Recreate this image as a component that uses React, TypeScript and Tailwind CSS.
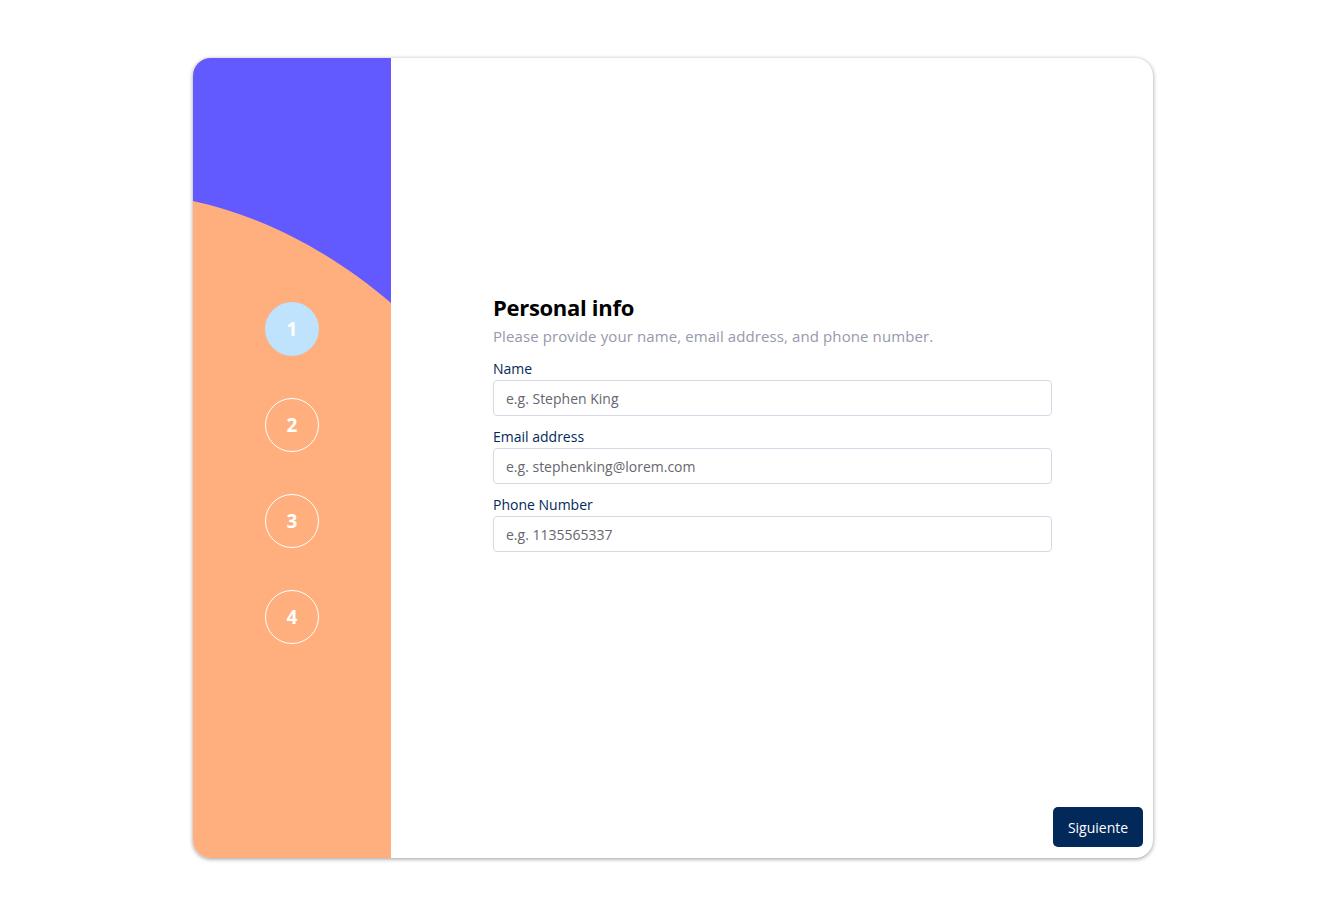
import React from "react";

const font = { fontFamily: '"Open Sans", "Noto Sans", sans-serif' };

function Field({ label, placeholder }: { label: string; placeholder: string }) {
  return (
    <div className="flex flex-col">
      <label className="text-[14px] leading-[18px] text-[#02295a] mb-[2px]">{label}</label>
      <input
        placeholder={placeholder}
        className="h-[36px] w-full rounded-[4px] border border-[#d6d9e6] px-[12px] text-[14px] text-[#02295a] placeholder:text-[#66666e] outline-none"
      />
    </div>
  );
}

export default function App() {
  const steps = [1, 2, 3, 4];
  return (
    <div className="min-h-[911px] w-full bg-white flex justify-center pt-[58px] pl-[7px]" style={font}>
      <div className="flex w-[960px] h-[800px] rounded-[18px] overflow-hidden bg-white shadow-[0_1px_4px_rgba(0,0,0,0.4)]">
        <div className="relative w-[198px] h-full bg-[#ffaf7e]">
          <svg className="absolute inset-0" width="198" height="800" viewBox="0 0 198 800">
            <path d="M0,0 L198,0 L198,245 C140,195 70,158 0,143 Z" fill="#6259ff" />
          </svg>
          <div className="relative flex flex-col items-center gap-[42px] pt-[244px]">
            {steps.map((n) =>
              n === 1 ? (
                <div
                  key={n}
                  className="w-[54px] h-[54px] rounded-full bg-[#bfe2fd] flex items-center justify-center text-white font-bold text-[19px]"
                >
                  {n}
                </div>
              ) : (
                <div
                  key={n}
                  className="w-[54px] h-[54px] rounded-full border border-white flex items-center justify-center text-white font-bold text-[19px]"
                >
                  {n}
                </div>
              )
            )}
          </div>
        </div>
        <div className="flex-1 flex flex-col">
          <div className="pt-[235px] pl-[102px] pr-[101px]">
            <h1 className="text-[22px] leading-[28px] font-bold text-black tracking-[-0.3px]">Personal info</h1>
            <p className="text-[15px] leading-[20px] text-[#9699ab] mt-[5px] tracking-[0.1px]">
              Please provide your name, email address, and phone number.
            </p>
            <div className="flex flex-col gap-[12px] mt-[14px]">
              <Field label="Name" placeholder="e.g. Stephen King" />
              <Field label="Email address" placeholder="e.g. stephenking@lorem.com" />
              <Field label="Phone Number" placeholder="e.g. 1135565337" />
            </div>
          </div>
          <div className="mt-auto flex justify-end pr-[10px] pb-[11px]">
            <button className="w-[90px] h-[40px] rounded-[5px] bg-[#022959] text-white text-[14px]">
              Siguiente
            </button>
          </div>
        </div>
      </div>
    </div>
  );
}
